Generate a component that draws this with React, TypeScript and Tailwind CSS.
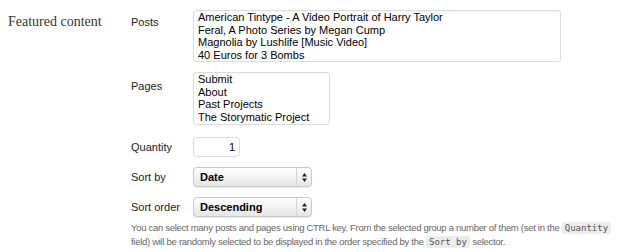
const posts = [
  "American Tintype - A Video Portrait of Harry Taylor",
  "Feral, A Photo Series by Megan Cump",
  "Magnolia by Lushlife [Music Video]",
  "40 Euros for 3 Bombs",
];

const pages = ["Submit", "About", "Past Projects", "The Storymatic Project"];

function ListBox({ items, className }: { items: string[]; className: string }) {
  return (
    <div
      className={`rounded-[3px] border border-[#dcdcdc] bg-white px-[4px] pt-[0px] text-[11px] leading-[12.6px] text-black shadow-[inset_0_1px_1px_rgba(0,0,0,0.04)] ${className}`}
    >
      {items.map((item) => (
        <div key={item} className="whitespace-nowrap">
          {item}
        </div>
      ))}
    </div>
  );
}

function FakeSelect({ value }: { value: string }) {
  return (
    <div className="flex h-[20px] w-[119px] items-stretch rounded-[4px] border border-[#c8c8c8] bg-gradient-to-b from-white to-[#e6e6e6] text-[11px] font-bold text-black shadow-[0_1px_1px_rgba(0,0,0,0.08)]">
      <span className="flex flex-1 items-center pl-[6px]">{value}</span>
      <span className="flex w-[15px] items-center justify-center border-l border-[#d6d6d6]">
        <svg width="5" height="9" viewBox="0 0 5 9">
          <path d="M2.5 0 L5 3.5 L0 3.5 Z" fill="#222" />
          <path d="M2.5 9 L5 5.5 L0 5.5 Z" fill="#222" />
        </svg>
      </span>
    </div>
  );
}

function Code({ children }: { children: string }) {
  return (
    <code className="rounded-[2px] bg-[#ececec] px-[3px] py-[1px] font-['DejaVu_Sans_Mono',monospace] text-[9px] tracking-normal text-[#555]">
      {children}
    </code>
  );
}

export default function App() {
  return (
    <div className="flex h-[252px] w-[625px] bg-white font-['Liberation_Sans',Arial,sans-serif] text-[#222]">
      <div className="w-[131px] shrink-0 pl-[8px] pt-[11px] font-['Liberation_Serif',Georgia,serif] text-[14px] text-[#333]">
        Featured content
      </div>
      <div className="flex flex-col pt-[10px]">
        <div className="flex">
          <div className="w-[62px] pt-[4px] text-[11px]">Posts</div>
          <ListBox items={posts} className="h-[52px] w-[368px]" />
        </div>
        <div className="mt-[10px] flex">
          <div className="w-[62px] pt-[6px] text-[11px]">Pages</div>
          <ListBox items={pages} className="h-[53px] w-[137px]" />
        </div>
        <div className="mt-[12px] flex items-center">
          <div className="w-[62px] text-[11px]">Quantity</div>
          <div className="flex h-[20px] w-[47px] items-center justify-end rounded-[3px] border border-[#dcdcdc] bg-white pr-[4px] text-[11px] text-black">
            1
          </div>
        </div>
        <div className="mt-[10px] flex items-center">
          <div className="w-[62px] text-[11px]">Sort by</div>
          <FakeSelect value="Date" />
        </div>
        <div className="mt-[10px] flex items-center">
          <div className="w-[62px] text-[11px]">Sort order</div>
          <FakeSelect value="Descending" />
        </div>
        <p className="mt-[4px] w-[485px] text-[9.5px] leading-[14px] tracking-[-0.29px] text-[#666]">
          You can select many posts and pages using CTRL key. From the selected group a number of them (set in the{" "}
          <Code>Quantity</Code> field) will be randomly selected to be displayed in the order specified by the{" "}
          <Code>Sort by</Code> selector.
        </p>
      </div>
    </div>
  );
}
